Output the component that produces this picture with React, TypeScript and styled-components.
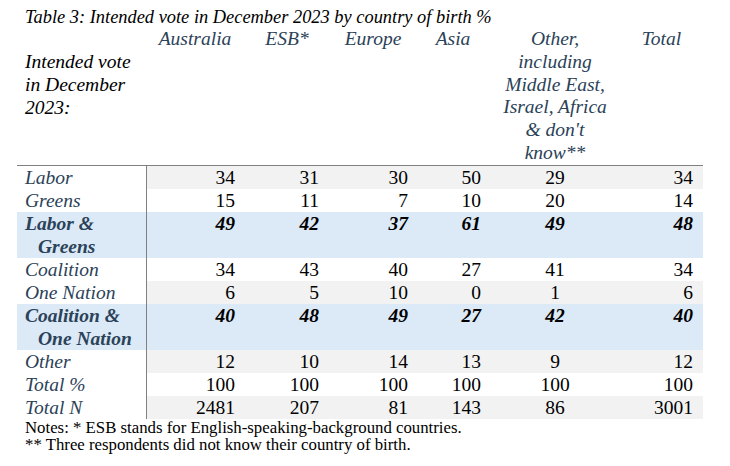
import { FC } from 'react';
import styled, { createGlobalStyle } from 'styled-components';

const LABEL = '#2b4258';
const LINE = '#808080';

type Col = { name: string; width: number; pad: number; center?: boolean };

const COLUMNS: Col[] = [
  { name: 'Australia', width: 98, pad: 9 },
  { name: 'ESB*', width: 86, pad: 11 },
  { name: 'Europe', width: 86, pad: 8 },
  { name: 'Asia', width: 74, pad: 9 },
  { name: 'other', width: 130, pad: 0, center: true },
  { name: 'Total', width: 83, pad: 10 },
];

type Shade = 'gray' | 'white' | 'blue';

type Row = {
  label: string;
  second?: string;
  values: number[];
  shade: Shade;
};

const ROWS: Row[] = [
  { label: 'Labor', values: [34, 31, 30, 50, 29, 34], shade: 'gray' },
  { label: 'Greens', values: [15, 11, 7, 10, 20, 14], shade: 'white' },
  { label: 'Labor &', second: 'Greens', values: [49, 42, 37, 61, 49, 48], shade: 'blue' },
  { label: 'Coalition', values: [34, 43, 40, 27, 41, 34], shade: 'white' },
  { label: 'One Nation', values: [6, 5, 10, 0, 1, 6], shade: 'gray' },
  { label: 'Coalition &', second: 'One Nation', values: [40, 48, 49, 27, 42, 40], shade: 'blue' },
  { label: 'Other', values: [12, 10, 14, 13, 9, 12], shade: 'gray' },
  { label: 'Total %', values: [100, 100, 100, 100, 100, 100], shade: 'white' },
  { label: 'Total N', values: [2481, 207, 81, 143, 86, 3001], shade: 'gray' },
];

const SHADES: Record<Shade, string> = { gray: '#f2f2f2', white: '#ffffff', blue: '#dce9f7' };

const App: FC = () => (
  <>
    <GlobalStyle />
    <Page>
      <Title>Table 3: Intended vote in December 2023 by country of birth %</Title>
      <Table>
        <colgroup>
          <Col $width={129} />
          {COLUMNS.map((c) => (
            <Col key={c.name} $width={c.width} />
          ))}
        </colgroup>
        <thead>
          <tr>
            <CornerCell>
              Intended vote
              <br />
              in December
              <br />
              2023:
            </CornerCell>
            {COLUMNS.map((c) => (
              <HeadCell key={c.name}>
                {c.center ? (
                  <>
                    Other,
                    <br />
                    including
                    <br />
                    Middle East,
                    <br />
                    Israel, Africa
                    <br />
                    &amp; don&apos;t
                    <br />
                    know**
                  </>
                ) : (
                  c.name
                )}
              </HeadCell>
            ))}
          </tr>
        </thead>
        <tbody>
          {ROWS.map((r, i) => {
            const bold = r.shade === 'blue';
            return (
              <tr key={r.label}>
                <LabelCell $bold={bold} $shade={bold ? 'blue' : 'white'} $first={i === 0}>
                  {r.label}
                  {r.second && <Second>{r.second}</Second>}
                </LabelCell>
                {r.values.map((v, j) => (
                  <NumCell
                    key={j}
                    $bold={bold}
                    $shade={r.shade}
                    $first={i === 0}
                    $pad={COLUMNS[j].pad}
                    $center={!!COLUMNS[j].center}
                  >
                    {v}
                  </NumCell>
                ))}
              </tr>
            );
          })}
        </tbody>
      </Table>
      <Notes>
        Notes: * ESB stands for English-speaking-background countries.
        <br />
        ** Three respondents did not know their country of birth.
      </Notes>
    </Page>
  </>
);

export default App;

const GlobalStyle = createGlobalStyle`
  body {
    margin: 0;
    background: #ffffff;
    font-family: "Liberation Serif", "Times New Roman", serif;
    color: #000000;
  }
`;

const Page = styled.div`
  width: 730px;
  height: 466px;
  padding: 7px 0 0 17px;
  box-sizing: border-box;
  overflow: hidden;
`;

const Title = styled.div`
  padding-left: 8px;
  font-size: 18.4px;
  font-style: italic;
  line-height: 21px;
`;

const Table = styled.table`
  width: 686px;
  table-layout: fixed;
  border-collapse: collapse;
  font-size: 19.5px;
`;

const Col = styled.col<{ $width: number }>`
  width: ${({ $width }) => $width}px;
`;

const CornerCell = styled.th`
  padding: 23px 0 0 8px;
  vertical-align: top;
  text-align: left;
  font-weight: normal;
  font-style: italic;
  line-height: 22.8px;
  color: #000000;
  white-space: nowrap;
`;

const HeadCell = styled.th`
  padding: 0;
  vertical-align: top;
  text-align: center;
  font-weight: normal;
  font-style: italic;
  line-height: 22.8px;
  color: ${LABEL};
  white-space: nowrap;
`;

const LabelCell = styled.td<{ $bold: boolean; $shade: Shade; $first: boolean }>`
  padding: 0 0 0 8px;
  vertical-align: top;
  line-height: 23px;
  font-style: italic;
  font-weight: ${({ $bold }) => ($bold ? 'bold' : 'normal')};
  color: ${LABEL};
  white-space: nowrap;
  background: ${({ $shade }) => SHADES[$shade]};
  border-right: 1px solid ${LINE};
  border-top: ${({ $first }) => ($first ? `1px solid ${LINE}` : 'none')};
`;

const Second = styled.div`
  padding-left: 13px;
`;

const NumCell = styled.td<{
  $bold: boolean;
  $shade: Shade;
  $first: boolean;
  $pad: number;
  $center: boolean;
}>`
  padding: 0 ${({ $pad }) => $pad}px 0 0;
  vertical-align: top;
  line-height: 23px;
  text-align: ${({ $center }) => ($center ? 'center' : 'right')};
  font-style: ${({ $bold }) => ($bold ? 'italic' : 'normal')};
  font-weight: ${({ $bold }) => ($bold ? 'bold' : 'normal')};
  background: ${({ $shade }) => SHADES[$shade]};
  border-top: ${({ $first }) => ($first ? `1px solid ${LINE}` : 'none')};
`;

const Notes = styled.div`
  padding-left: 8px;
  font-size: 16.8px;
  line-height: 17px;
`;
